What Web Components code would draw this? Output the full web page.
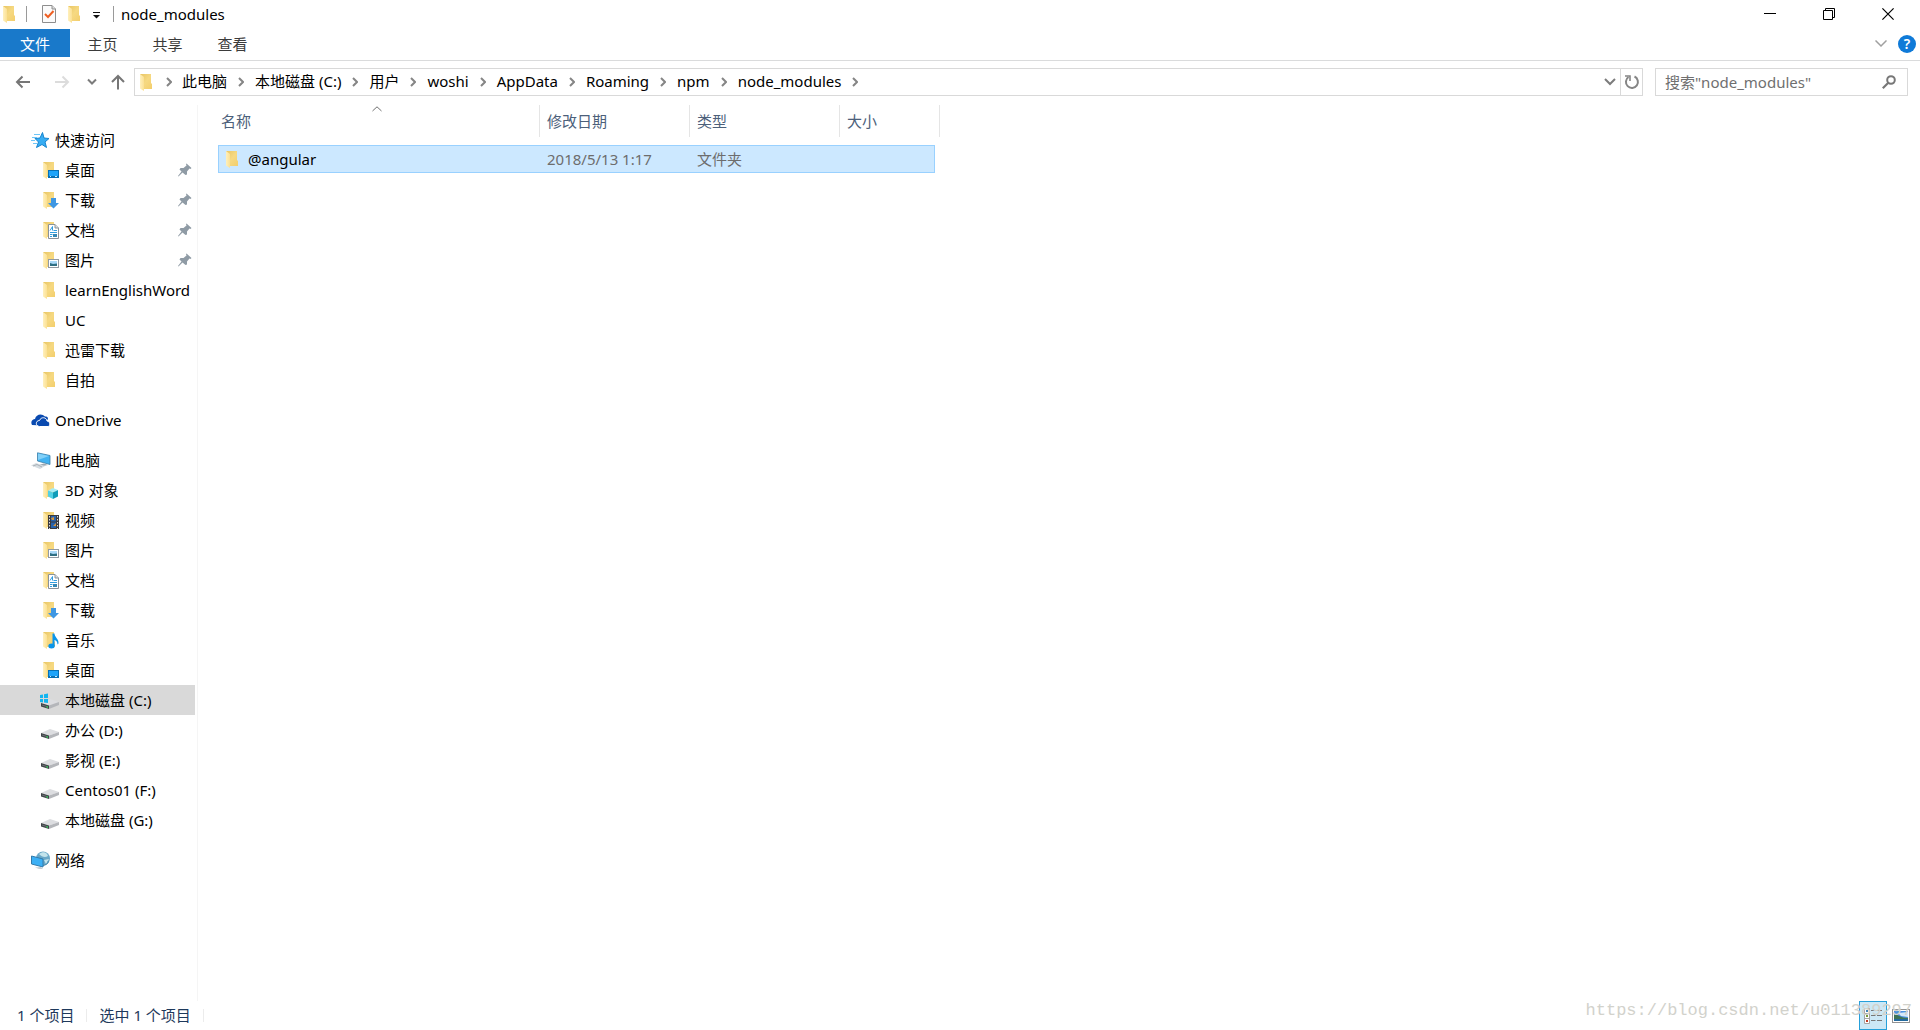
<!DOCTYPE html>
<html lang="zh-CN">
<head>
<meta charset="utf-8">
<title>node_modules</title>
<style>
html, body { margin: 0; height: 100%; }
body { background: #fff; color: #000; font: 15px/20px "Noto Sans", "Noto Sans CJK SC", sans-serif; overflow: hidden; }
</style>
</head>
<body>
<explorer-window></explorer-window>
<script>
const RESET = `
*, *::before, *::after { box-sizing: border-box; }
button, input { font: inherit; color: inherit; background: none; border: 0; margin: 0; padding: 0; outline: 0; }
a { color: inherit; text-decoration: none; }
`;
function define(name, css, html) {
  const tpl = document.createElement('template');
  customElements.define(name, class extends HTMLElement {
    connectedCallback() {
      if (this.shadowRoot) return;
      tpl.innerHTML = `<style>${RESET}${css}</style>${html}`;
      this.attachShadow({ mode: 'open' }).append(tpl.content.cloneNode(true));
    }
  });
}

/* ---------- icons ---------- */
const FOLDER = `<defs><linearGradient id="fb" x1="0" y1="0" x2="1" y2="1"><stop offset="0" stop-color="#e8c563"/><stop offset=".5" stop-color="#f6d982"/><stop offset="1" stop-color="#f3ce6c"/></linearGradient><linearGradient id="ff" x1="0" y1="0" x2="1" y2="0"><stop offset="0" stop-color="#fff0bd"/><stop offset="1" stop-color="#fbe093"/></linearGradient></defs>
<path d="M2 1H13V10L14 11V16H4Z" fill="url(#fb)"/><path d="M2 1L6 4V18L2 15.500Z" fill="url(#ff)"/>`;
const DRIVE = `<path d="M0 10L9 6L18 9L8 12.500Z" fill="#dcdde0"/><path d="M8 12.500L18 9V12L8 16Z" fill="#b4b6ba"/><path d="M0 10L8 12.500V16L0 13.500Z" fill="#3f4347"/><path d="M1 12L6 13.500" stroke="#6b7075"/><path d="M5.500 14h1.500" stroke="#35d05c" stroke-width="1.500"/>`;
const st = (d, c, w) => `<path d="${d}" fill="none" stroke="${c}" stroke-width="${w}"/>`;
const ICONS = {
  folder: [18, 18, FOLDER],
  desktop: [18, 18, FOLDER + `<rect x="7.500" y="9.500" width="10" height="7" fill="#1ea4fa" stroke="#0870b4"/><path d="M8 15.500H17" stroke="#0870b4"/><path d="M9 15.500h1M14 15.500h2" stroke="#bfe6ff"/>`],
  download: [18, 18, FOLDER + `<path d="M10 7H15V12H18L12.500 17.500L7 12H10Z" fill="#3e97e3"/>`],
  document: [18, 18, FOLDER + `<path d="M7.500 3.500H14L17.500 7V17.500H7.500Z" fill="#fff" stroke="#8a9299"/><path d="M14 3.500V7H17.500" fill="#ddd" stroke="#8a9299"/><path d="M9 9.500L11.500 5.500V9.500M12.500 9.500H16M9 11.500H16M9 13.500H11.500" stroke="#2f9de0" fill="none"/><rect x="12" y="13" width="4" height="3" fill="#3788b4"/><path d="M9 15.500h2" stroke="#2f9de0"/>`],
  picture: [18, 18, FOLDER + `<rect x="7.500" y="8.500" width="10" height="8" fill="#fff" stroke="#929ba3"/><rect x="9" y="10" width="7" height="5" fill="#a9d8f7"/><path d="M9 12L12 13L16 12.500V15H9Z" fill="#2f6f84"/>`],
  cube: [18, 18, FOLDER + `<path d="M7 9.500L12 7L17 9L12 11.500Z" fill="#a6ecf6"/><path d="M7 9.500L12 11.500V18L7 15.500Z" fill="#52d0e4"/><path d="M12 11.500L17 9V15.500L12 18Z" fill="#0e9cb9"/>`],
  video: [18, 18, FOLDER + `<rect x="7" y="4" width="11" height="14" fill="#3b3b3e"/><rect x="10" y="5" width="5" height="5.500" fill="#2863ad"/><rect x="10" y="11.500" width="5" height="5.500" fill="#2863ad"/><path d="M10 7L13 6V9H11ZM12 15L15 12V15Z" fill="#d6943a"/><path d="M8.500 5V18M16.500 5V18" stroke="#ddd" stroke-dasharray="1.500 1.500"/>`],
  music: [18, 18, FOLDER + `<path d="M11.500 2.500H13.500C13.500 6.500 18 7.500 17.500 12.500L16.500 13.500C16.500 10.500 15 9.500 13.500 9V15H11.500Z" fill="#0a95ea"/><ellipse cx="10.500" cy="15" rx="3.200" ry="2.500" fill="#0a95ea"/>`],
  drive: [18, 18, `<g transform="translate(0 2)">${DRIVE}</g>`],
  windrive: [20, 18, `<g transform="translate(2 2)">${DRIVE}</g><path d="M1 4L4 3.500V7H1ZM5 3.300L9 2.500V7H5ZM1 8H4V11.500L1 11ZM5 8H9V12L5 11.600Z" fill="#11b5f0"/>`],
  star: [18, 18, `<path d="M11.500 1.500L13 7L18 7.500L14 11L15.500 16.500L11 13.500L5.500 16.500L7.500 11L4 7.500L9 7Z" fill="#37adf3" stroke="#1684cf"/><path d="M3 3.500H9M1 6.500H6M0 9.500H4M2 12.500H6" stroke="#6dc6f8"/>`],
  cloud: [20, 18, `<path d="M1 14C-1 10 2 8 4 8C5 3 11 2 14 5.500C16 5.500 17 6 17 8L12 14.500Z" fill="#0a4ab0"/><path d="M8.500 15.500C4 15 4.500 9.500 8.500 9.500C10 5.500 15.500 6 16 10C19.500 10 19.500 15.500 17 15.500Z" fill="#0a4ab0" stroke="#fff"/>`],
  pc: [20, 18, `<g transform="translate(0 1)"><path d="M6.500 .8L19 3.500V12.500L6.500 9Z" fill="#42b2f1" stroke="#3b7fa8" stroke-width=".8"/><path d="M7 1.500L18 4L7 8Z" fill="#82d0f8"/><path d="M13 11.500L17 13L10 14.500L9 12.500Z" fill="#9da9b3"/><path d="M0 13.500L5 11L14 14L9 17Z" fill="#d5dce1"/><path d="M2 14L6 12.500L11 15" stroke="#aab2b8" fill="none"/></g>`],
  network: [20, 18, `<circle cx="12" cy="7.500" r="7" fill="#6aa8c7"/><path d="M8 3C12 0 16 1 17 5C14 7 11 6 8 3ZM13 9L18 8L15 13Z" fill="#c3e4ec"/><path d="M17 10C18 12 15 14 12 14.500" stroke="#3e86ab" fill="none"/><path d="M.5 5L12 8V16L.5 13Z" fill="#3cb0f5" stroke="#337bab"/><path d="M4 16.500L10 16L12 18H8Z" fill="#c5ced4"/>`],
  pin: [14, 14, `<path d="M8.500 0.500L13.500 5L12.500 6L11.500 5.500L9 8.500V11.500L7.500 12L4.500 9.500L0.500 13.500L0 13L3.500 8.500L1.500 6.500L2.500 5H5.500L8.500 2.500L8 1Z" fill="#8f9ba5"/>`],
  checkdoc: [14, 18, `<path d="M.5 .5H10L13.500 4V17.500H.5Z" fill="#fbfbfb" stroke="#8e8e8e"/><path d="M10 .5V4H13.500" fill="#ddd" stroke="#8e8e8e"/>` + st('M3 9L6 12L11.500 6', '#ee5f22', 2)],
  custom: [8, 7, `<path d="M0 .5H7" stroke="#111"/><path d="M0 3H7L3.500 6.500Z" fill="#111"/>`],
  back: [16, 14, st('M15 7H1.500M7.500 1.500L2 7L7.500 12.500', '#767676', 2)],
  forward: [16, 14, st('M1 7H14.500M8.500 1.500L14 7L8.500 12.500', '#dcdcdc', 2)],
  up: [14, 16, st('M7 15.500V2M1 8L7 2L13 8', '#767676', 2)],
  down: [10, 8, st('M1 1.500L5 5.500L9 1.500', '#7c7c7c', 2)],
  drop: [12, 8, st('M1 1L6 6L11 1', '#7c7c7c', 2)],
  right: [6, 10, st('M1 1L5 5L1 9', '#858585', 2)],
  expand: [12, 8, st('M.5 .5L6 6L11.500 .5', '#a0a0a0', 1.5)],
  sort: [10, 6, st('M.5 5L5 .8L9.500 5', '#707070', 1)],
  refresh: [16, 16, st('M10.500 2.500A6 6 0 1 1 4.500 3', '#858585', 2) + st('M1 2H6V7', '#858585', 1.6)],
  search: [14, 14, `<circle cx="9" cy="5" r="3.800" fill="none" stroke="#777" stroke-width="2"/>` + st('M6.500 7.500L.8 13.200', '#777', 2.2)],
  minimize: [12, 12, st('M0 5.500H12', '#000', 1)],
  restore: [12, 12, st('M.5 2.500H9.500V11.500H.5ZM2.500 2V.5H11.500V9.500H10', '#000', 1)],
  close: [12, 12, st('M.4 .4L11.600 11.600M11.600 .4L.4 11.600', '#000', 1.2)],
  details: [18, 16, `<path d="M.5 .5H5.500V15.500H.5ZM.5 5.500H5.500M.5 10.500H5.500" fill="#fff" stroke="#a5a5a5"/><path d="M2 3h2" stroke="#3f83b8" stroke-width="2"/><path d="M2 8h2" stroke="#789a35" stroke-width="2"/><path d="M2 13h2" stroke="#c33a22" stroke-width="2"/><path d="M7 2.500h4.500M13 2.500h5M7 7.500h4.500M13 7.500h5M7 12.500h4.500M13 12.500h5" stroke="#777"/>`],
  large: [18, 14, `<rect x=".5" y=".5" width="17" height="13" fill="#fff" stroke="#929292"/><rect x="2" y="2" width="14" height="10" fill="#4b93e0"/><path d="M6 4L16 3V8L9 7Z" fill="#d5e9fa"/><path d="M2 5C7 6 9 9 16 9V10H2Z" fill="#3f7456"/><path d="M2 10H16V12H2Z" fill="#236a9e"/>`]
};
customElements.define('ui-icon', class extends HTMLElement {
  connectedCallback() {
    if (this.shadowRoot) return;
    const [w, h, body] = ICONS[this.getAttribute('name')];
    this.attachShadow({ mode: 'open' }).innerHTML =
      `<style>:host{display:inline-flex;flex:none}svg{display:block}</style><svg width="${w}" height="${h}" viewBox="0 0 ${w} ${h}" aria-hidden="true">${body}</svg>`;
  }
});

/* ---------- title bar ---------- */
define('title-bar', `
:host { display: flex; align-items: center; height: 29px; padding: 0 3px 0 1px; }
.quick { display: flex; align-items: center; }
.quick button { display: flex; }
.bar { width: 1px; height: 16px; background: #9a9a9a; }
.bar.a { margin: 0 15px 0 7px; } .bar.b { margin: 0 7px 0 12px; }
.check { margin-right: 10px; } .more { margin-left: 9px; padding: 4px 0 0; }
h1 { margin: 0; font: inherit; flex: 1; }
.ctl { display: flex; width: 59px; align-items: center; justify-content: center; }
`, `
<div class="quick"><ui-icon name="folder"></ui-icon><span class="bar a"></span>
<button class="check" aria-label="属性"><ui-icon name="checkdoc"></ui-icon></button>
<button aria-label="新建文件夹"><ui-icon name="folder"></ui-icon></button>
<button class="more" aria-label="自定义"><ui-icon name="custom"></ui-icon></button><span class="bar b"></span></div>
<h1><slot></slot></h1>
<button class="ctl" aria-label="最小化"><ui-icon name="minimize"></ui-icon></button>
<button class="ctl" aria-label="还原"><ui-icon name="restore"></ui-icon></button>
<button class="ctl" aria-label="关闭"><ui-icon name="close"></ui-icon></button>`);

/* ---------- ribbon ---------- */
define('ribbon-tab', `
:host { display: flex; width: 65px; }
button { flex: 1; height: 28px; color: #3b3b3b; padding-top: 2px; }
:host([primary]) { width: 70px; }
:host([primary]) button { background: #1979ca; color: #fff; }
`, `<button><slot></slot></button>`);
define('ribbon-bar', `
:host { display: flex; height: 32px; padding-right: 4px; border-bottom: 1px solid #dadbdc; }
.grow { flex: 1; }
.expand { display: flex; align-items: center; height: 30px; margin-right: 11px; }
.help { width: 18px; height: 18px; margin-top: 6px; border-radius: 50%; background: #0f7ad8; color: #fff; font-size: 14px; line-height: 18px; font-weight: 600; }
`, `<slot></slot><span class="grow"></span>
<button class="expand" aria-label="展开功能区"><ui-icon name="expand"></ui-icon></button>
<button class="help">?</button>`);

/* ---------- address row ---------- */
define('path-crumb', `
:host { display: flex; align-items: center; }
a { padding-bottom: 2px; white-space: nowrap; }
ui-icon { width: 28px; justify-content: center; }
`, `<a href="#"><slot></slot></a><ui-icon name="right"></ui-icon>`);
define('address-row', `
:host { display: flex; padding: 7px 12px 9px 4px; }
.nav { display: flex; align-items: center; justify-content: center; height: 28px; }
.back { width: 38px; } .fwd { width: 40px; } .hist { width: 20px; } .up { width: 32px; }
.path { flex: 1; display: flex; height: 28px; border: 1px solid #d9d9d9; margin-right: 12px; padding-left: 3px; align-items: center; }
.first { width: 26px; justify-content: center; }
.grow { flex: 1; }
.drop { display: flex; width: 20px; justify-content: center; }
.refresh { display: flex; align-self: stretch; align-items: center; justify-content: center; width: 22px; border-left: 1px solid #d9d9d9; }
.search { display: flex; align-items: center; flex: 0 0 253px; min-width: 0; height: 28px; border: 1px solid #d9d9d9; padding: 0 11px 0 9px; color: #767676; }
input { flex: 1; min-width: 0; height: 26px; }
input::placeholder { color: #6f6f6f; opacity: 1; }
`, `
<button class="nav back" aria-label="后退"><ui-icon name="back"></ui-icon></button>
<button class="nav fwd" aria-label="前进"><ui-icon name="forward"></ui-icon></button>
<button class="nav hist" aria-label="最近"><ui-icon name="down"></ui-icon></button>
<button class="nav up" aria-label="向上"><ui-icon name="up"></ui-icon></button>
<nav class="path"><ui-icon name="folder"></ui-icon><ui-icon class="first" name="right"></ui-icon><slot></slot><span class="grow"></span>
<button class="drop" aria-label="历史"><ui-icon name="drop"></ui-icon></button>
<button class="refresh" aria-label="刷新"><ui-icon name="refresh"></ui-icon></button></nav>
<label class="search"><input type="text" aria-label="搜索" placeholder="搜索&quot;node_modules&quot;"><ui-icon name="search"></ui-icon></label>`);

/* ---------- navigation pane ---------- */
customElements.define('nav-item', class extends HTMLElement {
  connectedCallback() {
    if (this.shadowRoot) return;
    this.attachShadow({ mode: 'open' }).innerHTML = `<style>${RESET}
:host { display: block; }
a { display: flex; align-items: center; height: 30px; padding: 0 3px 0 41px; white-space: nowrap; }
.box { width: 18px; margin-right: 6px; display: flex; justify-content: flex-end; }
.text { flex: 1; }
:host([root]) a { padding-left: 31px; }
:host([root]) .box { justify-content: flex-start; }
:host([selected]) a { background: #d9d9d9; }
</style><a href="#"><span class="box"><ui-icon name="${this.getAttribute('icon')}"></ui-icon></span><span class="text"><slot></slot></span>${this.hasAttribute('pinned') ? '<ui-icon name="pin"></ui-icon>' : ''}</a>`;
  }
});
define('nav-group', `:host { display: block; margin-bottom: 10px; }`, `<slot></slot>`);
define('nav-pane', `
:host { display: block; box-sizing: border-box; flex: 0 0 198px; padding: 20px 2px 0 0; border-right: 1px solid #f5f5f5; overflow: hidden; }
`, `<slot></slot>`);

/* ---------- file list ---------- */
define('file-list', `
:host { display: block; flex: 1; padding-left: 20px; min-width: 0; }
table { border-collapse: separate; border-spacing: 0; table-layout: fixed; width: 722px; text-align: left; }
th { position: relative; height: 32px; padding: 0; border-right: 1px solid #e5e5e5; font-weight: 400; color: #4c607a; }
th button { display: block; width: 100%; padding-left: 7px; text-align: left; }
th:first-child button { padding-left: 3px; }
.sort { position: absolute; top: 1px; left: 50%; margin-left: -7px; }
td { padding: 8px 0 0; color: #6d6d6d; }
td div { display: flex; align-items: center; height: 28px; padding-left: 7px; background: #cce8ff; border: solid #99d1ff; border-width: 1px 0; }
td:first-child div { border-left-width: 1px; padding-left: 5px; gap: 6px; color: #000; }
td:last-child div { border-right-width: 1px; margin-right: 5px; }
`, `
<table><colgroup><col style="width:322px"><col style="width:150px"><col style="width:150px"><col style="width:100px"></colgroup>
<thead><tr><th><ui-icon class="sort" name="sort"></ui-icon><button>名称</button></th><th><button>修改日期</button></th><th><button>类型</button></th><th><button>大小</button></th></tr></thead>
<tbody><tr><td><div><ui-icon name="folder"></ui-icon>@angular</div></td><td><div>2018/5/13 1:17</div></td><td><div>文件夹</div></td><td><div></div></td></tr></tbody></table>`);

/* ---------- status bar ---------- */
define('status-bar', `
:host { position: relative; display: flex; align-items: center; height: 29px; padding: 0 10px 0 17px; color: #1e395b; }
.text { padding-bottom: 2px; }
.sep { width: 1px; height: 13px; background: #ececec; margin: 0 12px; }
.grow { flex: 1; }
.view { display: flex; align-items: center; justify-content: center; height: 29px; }
.on { width: 28px; background: #cce8f6; border: 1px solid #26a0da; margin-right: 5px; }
.mark { position: absolute; right: 8px; top: -2px; font: 17px/24px "Liberation Mono", monospace; color: #d2d2cc; pointer-events: none; }
`, `<span class="text">1 个项目</span><span class="sep"></span><span class="text">选中 1 个项目</span><span class="sep"></span><span class="grow"></span>
<button class="view on" aria-label="详细信息"><ui-icon name="details"></ui-icon></button>
<button class="view" aria-label="大图标"><ui-icon name="large"></ui-icon></button>
<span class="mark">https://blog.csdn.net/u011389297</span>`);

/* ---------- window ---------- */
define('explorer-window', `
:host { display: flex; flex-direction: column; height: 100vh; background: #fff; }
main { display: flex; flex: 1; min-height: 0; }
title-bar { box-sizing: border-box; padding-bottom: 2px; }
`, `
<title-bar>node_modules</title-bar>
<ribbon-bar><ribbon-tab primary>文件</ribbon-tab><ribbon-tab>主页</ribbon-tab><ribbon-tab>共享</ribbon-tab><ribbon-tab>查看</ribbon-tab></ribbon-bar>
<address-row><path-crumb>此电脑</path-crumb><path-crumb>本地磁盘 (C:)</path-crumb><path-crumb>用户</path-crumb><path-crumb>woshi</path-crumb><path-crumb>AppData</path-crumb><path-crumb>Roaming</path-crumb><path-crumb>npm</path-crumb><path-crumb>node_modules</path-crumb></address-row>
<main>
<nav-pane>
<nav-group><nav-item root icon="star">快速访问</nav-item>
<nav-item icon="desktop" pinned>桌面</nav-item><nav-item icon="download" pinned>下载</nav-item><nav-item icon="document" pinned>文档</nav-item><nav-item icon="picture" pinned>图片</nav-item>
<nav-item icon="folder">learnEnglishWord</nav-item><nav-item icon="folder">UC</nav-item><nav-item icon="folder">迅雷下载</nav-item><nav-item icon="folder">自拍</nav-item></nav-group>
<nav-group><nav-item root icon="cloud">OneDrive</nav-item></nav-group>
<nav-group><nav-item root icon="pc">此电脑</nav-item>
<nav-item icon="cube">3D 对象</nav-item><nav-item icon="video">视频</nav-item><nav-item icon="picture">图片</nav-item><nav-item icon="document">文档</nav-item><nav-item icon="download">下载</nav-item><nav-item icon="music">音乐</nav-item><nav-item icon="desktop">桌面</nav-item>
<nav-item icon="windrive" selected>本地磁盘 (C:)</nav-item><nav-item icon="drive">办公 (D:)</nav-item><nav-item icon="drive">影视 (E:)</nav-item><nav-item icon="drive">Centos01 (F:)</nav-item><nav-item icon="drive">本地磁盘 (G:)</nav-item></nav-group>
<nav-group><nav-item root icon="network">网络</nav-item></nav-group>
</nav-pane>
<file-list></file-list>
</main>
<status-bar></status-bar>`);
</script>
</body>
</html>
